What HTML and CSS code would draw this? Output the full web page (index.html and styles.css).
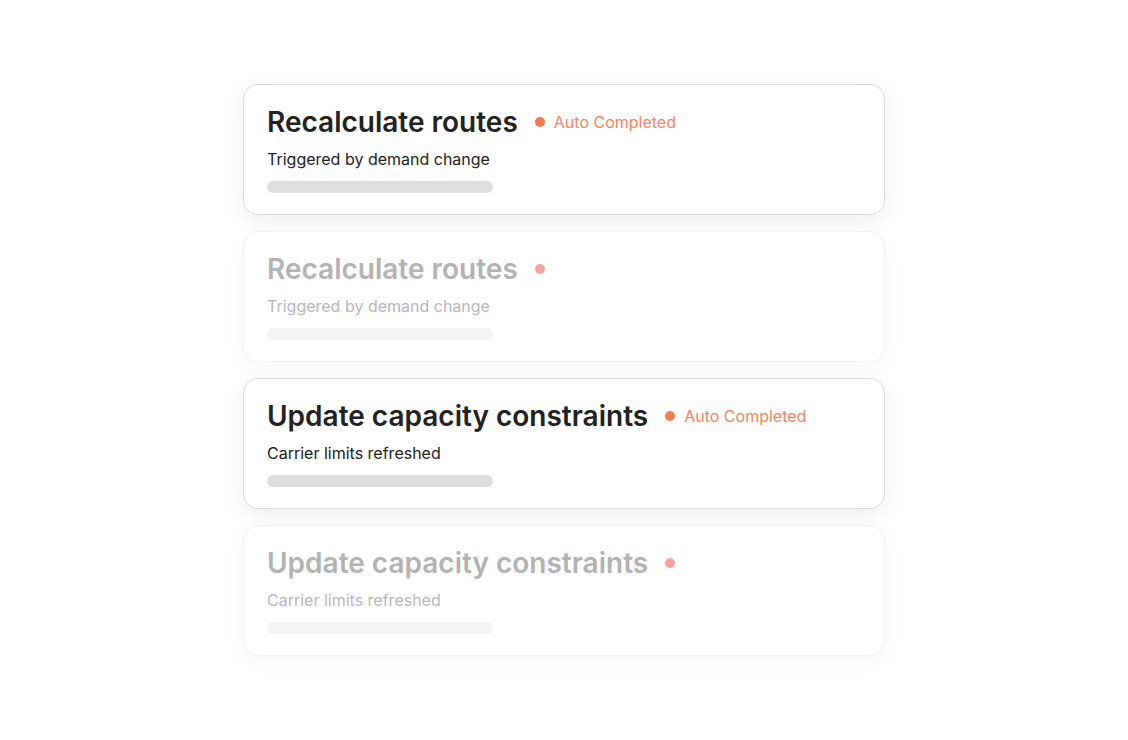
FILE: index.html
```html
<!DOCTYPE html>
<html>
<head>
<meta charset="utf-8">
<link rel="stylesheet" href="styles.css">
</head>
<body>
<main class="stack">
  <section class="card">
    <div class="head">
      <h2 class="title">Recalculate routes</h2>
      <span class="status"><span class="dot"></span><span class="label">Auto Completed</span></span>
    </div>
    <p class="sub">Triggered by demand change</p>
    <div class="bar"></div>
  </section>
  <section class="card faded">
    <div class="head">
      <h2 class="title">Recalculate routes</h2>
      <span class="status"><span class="dot"></span></span>
    </div>
    <p class="sub">Triggered by demand change</p>
    <div class="bar"></div>
  </section>
  <section class="card">
    <div class="head">
      <h2 class="title">Update capacity constraints</h2>
      <span class="status"><span class="dot"></span><span class="label">Auto Completed</span></span>
    </div>
    <p class="sub">Carrier limits refreshed</p>
    <div class="bar"></div>
  </section>
  <section class="card faded">
    <div class="head">
      <h2 class="title">Update capacity constraints</h2>
      <span class="status"><span class="dot"></span></span>
    </div>
    <p class="sub">Carrier limits refreshed</p>
    <div class="bar"></div>
  </section>
</main>
</body>
</html>
```
FILE: styles.css
```css
* { box-sizing: border-box; }
html, body { margin: 0; padding: 0; background: #ffffff; }
body {
  font-family: Inter, "Noto Sans", sans-serif;
  width: 1128px;
  height: 740px;
  overflow: hidden;
}
.stack {
  width: 642px;
  margin: 84px 0 0 243px;
  display: flex;
  flex-direction: column;
  gap: 16px;
}
.card {
  height: 131px;
  background: #fff;
  border: 1px solid #dcdcdc;
  border-radius: 15px;
  padding: 20px 23px 0 23px;
  box-shadow: 0 6px 20px rgba(0, 0, 0, 0.07);
}
.head {
  display: flex;
  align-items: center;
  gap: 17px;
  height: 34px;
}
.title {
  margin: 0;
  font-size: 28px;
  font-weight: 600;
  color: #222222;
  white-space: nowrap;
}
.status {
  display: flex;
  align-items: center;
  gap: 9px;
}
.dot {
  width: 10px;
  height: 10px;
  border-radius: 50%;
  background: #f47b4c;
}
.label {
  font-size: 16px;
  color: #f4845b;
}
.sub {
  margin: 10px 0 0 0;
  font-size: 16px;
  color: #222;
  line-height: 20px;
}
.bar {
  margin-top: 12px;
  width: 226px;
  height: 12px;
  border-radius: 6px;
  background: #dedede;
}
.faded {
  border-color: #f2f2f2;
  box-shadow: 0 6px 20px rgba(0, 0, 0, 0.035);
}
.faded .title { color: #b3b3b3; }
.faded .sub { color: #b8b8b8; }
.faded .bar { background: #f3f3f3; }
.faded .dot { background: #f6a29e; }
```
